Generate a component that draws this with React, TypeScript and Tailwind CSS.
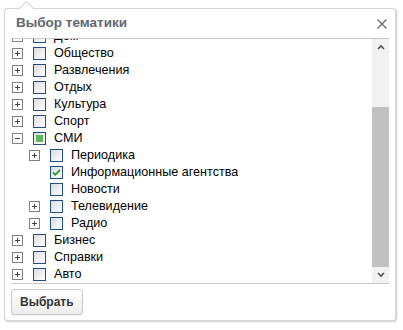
type Node = {
  label: string;
  level: number;
  expander?: "plus" | "minus";
  state?: "checked" | "partial";
};

const rows: Node[] = [
  { label: "Дом", level: 0, expander: "minus" },
  { label: "Общество", level: 0, expander: "plus" },
  { label: "Развлечения", level: 0, expander: "plus" },
  { label: "Отдых", level: 0, expander: "plus" },
  { label: "Культура", level: 0, expander: "plus" },
  { label: "Спорт", level: 0, expander: "plus" },
  { label: "СМИ", level: 0, expander: "minus", state: "partial" },
  { label: "Периодика", level: 1, expander: "plus" },
  { label: "Информационные агентства", level: 1, state: "checked" },
  { label: "Новости", level: 1 },
  { label: "Телевидение", level: 1, expander: "plus" },
  { label: "Радио", level: 1, expander: "plus" },
  { label: "Бизнес", level: 0, expander: "plus" },
  { label: "Справки", level: 0, expander: "plus" },
  { label: "Авто", level: 0, expander: "plus" },
];

function Expander({ kind }: { kind?: "plus" | "minus" }) {
  if (!kind) return <span className="w-[11px] h-[11px] shrink-0" />;
  return (
    <svg width="11" height="11" viewBox="0 0 11 11" className="shrink-0">
      <rect x="0.5" y="0.5" width="10" height="10" fill="#fff" stroke="#808080" />
      <path d="M3 5.5h5" stroke="#444" />
      {kind === "plus" && <path d="M5.5 3v5" stroke="#444" />}
    </svg>
  );
}

function Check({ state }: { state?: "checked" | "partial" }) {
  return (
    <span className="w-[13px] h-[13px] shrink-0 border border-[#1f4f82] bg-gradient-to-br from-[#dcdcdc] to-white flex items-center justify-center">
      {state === "partial" && <span className="w-[7px] h-[7px] bg-[#5cb85c]" />}
      {state === "checked" && (
        <svg width="9" height="9" viewBox="0 0 9 9">
          <path d="M1 4.5l2.3 2.3L8 2" fill="none" stroke="#2e9b2e" strokeWidth="1.8" />
        </svg>
      )}
    </span>
  );
}

export default function App() {
  return (
    <div className="w-[403px] h-[330px] bg-white relative" style={{ fontFamily: '"Liberation Sans", Arial, sans-serif' }}>
      <div className="absolute left-[21px] top-[3px] w-[11px] h-[11px] rotate-45 bg-white border-l border-t border-[#d4d4d4] z-10" />
      <div className="absolute left-[4px] top-[8px] w-[392px] h-[313px] border border-[#d4d4d4] rounded-[3px] shadow-[1px_1px_2px_rgba(0,0,0,0.2)] bg-white flex flex-col px-[6px]">
        <div className="h-[30px] flex items-center justify-between border-b border-[#c8c8c8] pl-[5px] pr-[1px] relative z-20">
          <span className="text-[13.5px] font-bold text-[#5f6770]">Выбор тематики</span>
          <svg width="12" height="12" viewBox="0 0 12 12">
            <path d="M1.5 1.5l9 9M10.5 1.5l-9 9" stroke="#666" strokeWidth="1.3" />
          </svg>
        </div>
        <div className="h-[245px] flex border-b border-[#c8c8c8]">
          <div className="flex-1 overflow-hidden">
            <div className="-mt-[11px]">
              {rows.map((r) => (
                <div
                  key={r.label}
                  className={`h-[17px] flex items-center gap-[10px] ${r.level ? "pl-[18px]" : "pl-[1px]"}`}
                >
                  <Expander kind={r.expander} />
                  <Check state={r.state} />
                  <span className="text-[12.6px] text-black leading-none -ml-[2px]">{r.label}</span>
                </div>
              ))}
            </div>
          </div>
          <div className="w-[17px] bg-[#f1f1f1] flex flex-col">
            <div className="h-[16px] flex items-center justify-center">
              <svg width="8" height="6" viewBox="0 0 8 6">
                <path d="M1 5l3-3 3 3" fill="none" stroke="#505050" strokeWidth="1.6" />
              </svg>
            </div>
            <div className="flex-1 flex flex-col justify-end">
              <div className="h-[160px] bg-[#c1c1c1]" />
            </div>
            <div className="h-[16px] flex items-center justify-center">
              <svg width="8" height="6" viewBox="0 0 8 6">
                <path d="M1 1l3 3 3-3" fill="none" stroke="#505050" strokeWidth="1.6" />
              </svg>
            </div>
          </div>
        </div>
        <div className="flex-1 flex items-center">
          <button className="h-[26px] px-[8px] rounded-[3px] border border-[#c8c8c8] bg-gradient-to-b from-white to-[#ececec] text-[12px] font-bold text-[#333] shadow-[0_1px_1px_rgba(0,0,0,0.05)]">
            Выбрать
          </button>
        </div>
      </div>
    </div>
  );
}
